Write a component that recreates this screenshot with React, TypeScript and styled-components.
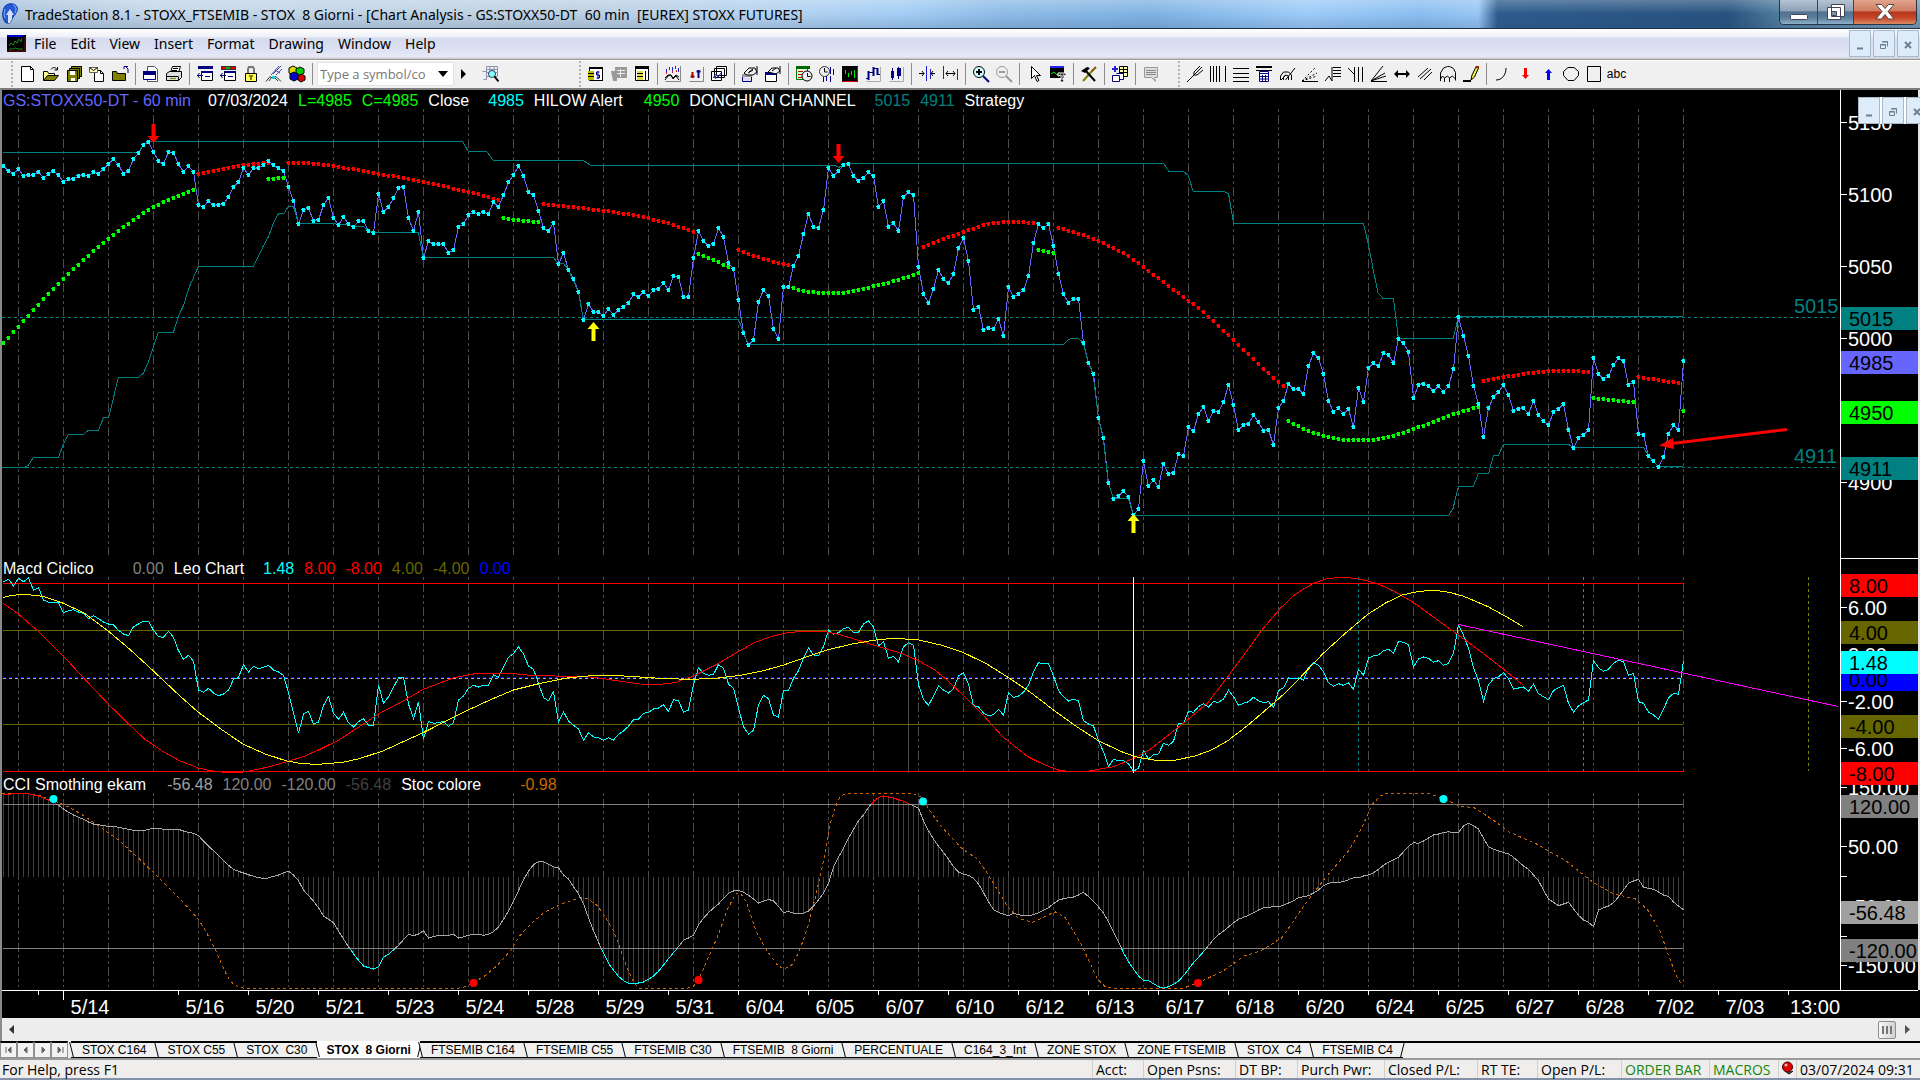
import React from "react";
import styled, { createGlobalStyle } from "styled-components";

const UI = `"Open Sans", "Noto Sans", sans-serif`;
const CAPTION = `"Noto Sans", "Open Sans", sans-serif`;
const ARIAL = `"Liberation Sans", Arial, sans-serif`;

const Global = createGlobalStyle`
  * { box-sizing: border-box; }
  body { margin: 0; background: #f0f0f0; font-family: ${UI}; color: #000; overflow: hidden; }
  button, input { font: inherit; color: inherit; }
`;

const Page = styled.div`display: flex; flex-direction: column; min-height: 100vh;`;

/* ---------- title bar ---------- */
const TitleBar = styled.header`
  display: flex; align-items: flex-start; height: 29px; padding-left: 1px;
  border-bottom: 1px solid #1d3247;
  background:
    linear-gradient(180deg, rgba(255,255,255,.25), rgba(255,255,255,0) 50%, rgba(40,70,110,.18)),
    linear-gradient(90deg, #a9c3dc 0, #c3d6e8 8%, #bdd0e2 30%, #b4d2ef 40%, #a3cdf4 47%, #8dbbe6 52%, #7fb2e2 60%, #9ccbf8 68%, #8abdf0 74%, #96c5f3 77%, #2c5b8c 78%, #27527f 90%, #54809f 93%, #7d9ab0 100%);
`;
const TitleText = styled.h1`
  flex: 1; margin: 0 0 0 6px; font-family: ${CAPTION}; font-size: 14px; font-weight: 400; line-height: 29px; white-space: pre;
`;
const WinButtons = styled.div`
  display: flex; height: 25px; margin-right: 3px; border: 1px solid #22354a; border-top: 0;
  border-radius: 0 0 5px 5px; overflow: hidden;
`;
const WinButton = styled.button<{ $w: number; $close?: boolean }>`
  width: ${p => p.$w}px; padding: 0; border: 0; border-right: 1px solid #33475c; display: grid; place-items: center;
  background: ${p => p.$close
    ? "linear-gradient(180deg,#e0a58c 0,#cf7c62 45%,#b5361b 50%,#c8472a 75%,#d98a62 100%)"
    : "linear-gradient(180deg,#b4c4d3 0,#8fa3b8 45%,#50708f 50%,#5c7f9d 75%,#8fb0c8 100%)"};
  &:last-child { border-right: 0; }
`;

/* ---------- menu bar ---------- */
const MenuBar = styled.nav`
  display: flex; align-items: center; height: 31px; padding: 0 0 2px 7px;
  background: linear-gradient(180deg, #fff 0, #eef0f8 8px, #d5dcee 9px, #dbe0f2 20px, #e6e9f7 28px, #b4b9cc 28px, #fff 29px, #9a9a9a 30px);
`;
const MenuItems = styled.div`display: flex; flex: 1; gap: 14px; margin-left: 8px;`;
const MenuItem = styled.button`
  padding: 0; border: 0; background: none; font-family: ${CAPTION}; font-size: 14px; line-height: 20px;
`;
const MdiButtons = styled.div`display: flex; gap: 2px; align-self: flex-start; padding: 1px 1px 0 0;`;
const MdiButton = styled.button`
  width: 22px; height: 27px; padding: 3px 0 0; border: 1px solid #a5b8cc; background: #deebf8;
  display: grid; place-items: center;
`;

/* ---------- tool bar ---------- */
const ToolBar = styled.div`
  display: flex; align-items: center; height: 30px; padding: 0 0 2px 11px; background: #f0f0f0;
  border-top: 1px solid #fff; border-bottom: 2px solid #7c7c7c;
`;
const Grip = styled.span`width: 5px; height: 26px; flex: none; border-left: 2px dotted #b4b4b4;`;
const Divider = styled.span`
  width: 8px; height: 22px; flex: none; display: flex; justify-content: center;
  &::before { content: ""; width: 1px; background: #8c8c8c; }
`;
const Gap = styled.span<{ $w: number }>`width: ${p => p.$w}px; flex: none;`;
const ToolButton = styled.button<{ $w?: number }>`
  width: ${p => p.$w || 23}px; height: 23px; flex: none; padding: 0; border: 0; background: none; display: grid; place-items: center;
`;
const SymbolBox = styled.label`
  display: flex; align-items: center; width: 137px; height: 24px; padding: 0 4px 0 2px; background: #fff; border: 1px solid #e2e3ea;
`;
const SymbolInput = styled.input`
  flex: 1; min-width: 0; padding: 0; border: 0; outline: 0; background: none; font-size: 13px;
  &::placeholder { color: #777; opacity: 1; }
`;
const DropArrow = styled.button`
  width: 12px; height: 12px; padding: 0; border: 0; background: none; display: grid; place-items: center;
`;

/* ---------- chart ---------- */
const Chart = styled.main`
  display: grid; grid-template-columns: 1fr 80px; background: #000; font-family: ${ARIAL};
  border-left: 2px solid #8a8a8a; position: relative;
`;
const Panes = styled.div`display: flex; flex-direction: column; min-width: 0;`;
const Legend = styled.div<{ $h: number; $line: number }>`
  display: flex; gap: 10px; height: ${p => p.$h}px; padding-left: 1px; font-size: 16px; line-height: ${p => p.$line}px;
  white-space: pre;
`;
const Entry = styled.span<{ $c?: string; $lead?: number }>`
  color: ${p => p.$c || "#fff"}; margin-left: ${p => p.$lead || 0}px;
`;
const Plot = styled.svg<{ $h: number }>`display: block; width: 100%; height: ${p => p.$h}px;`;
const Scale = styled.svg`display: block; width: 80px; height: 900px; background: #000;`;
const TimeAxis = styled.div`
  grid-column: 1 / -1; display: flex; height: 28px; padding-right: 2px; border-top: 1px solid #fff; font-size: 20px;
  margin-right: 2px; color: #fff;
`;
const TimeCell = styled.span<{ $grow: number; $tick: number }>`
  flex: ${p => p.$grow} 1 0; min-width: 0; display: flex;
  &::before { content: ""; width: 1px; height: ${p => p.$tick}px; background: #fff; }
`;
const TimeLabel = styled.span`width: 52px; flex: none; text-align: center; line-height: 32px;`;
const FloatingButtons = styled.div`
  position: absolute; top: 7px; right: 0; width: 62px; height: 27px; overflow: hidden; display: flex; gap: 2px; background: #fff;
`;
const FloatingButton = styled(MdiButton)`flex: none;`;

/* ---------- bottom bars ---------- */
const ScrollBar = styled.div`
  display: flex; align-items: center; height: 23px; padding: 0 9px 0 5px; background: #ededed; border-left: 2px solid #8a8a8a;
`;
const ScrollArrow = styled.button`width: 8px; height: 14px; padding: 0; border: 0; background: none; display: grid; place-items: center;`;
const ScrollTrack = styled.div`flex: 1; display: flex; justify-content: flex-end; padding-right: 7px;`;
const Thumb = styled.span`
  width: 18px; height: 18px; border: 1px solid #8e8e8e; border-radius: 2px; background: linear-gradient(90deg,#f7f7f7,#d2d2d2);
  display: flex; justify-content: center; gap: 2px; padding: 4px 0;
  i { width: 2px; background: #777; }
`;
const TabBar = styled.div`
  display: flex; height: 19px; background: #f0f0f0; border-bottom: 2px solid #9a9a9a; font-family: ${ARIAL};
`;
const NavButton = styled.button`
  width: 17px; height: 17px; padding: 0; border: 1px solid #909090; border-top: 2px solid #000; background: #f2f2f2;
  display: grid; place-items: center; flex: none;
`;
const Tab = styled.button<{ $active?: boolean; $last?: boolean }>`
  position: relative; height: 17px; padding: ${p => (p.$active ? "0 9px" : "0 10px 0 11px")}; border: 0; flex: none; white-space: pre;
  font-size: 12px; line-height: 15px; font-weight: ${p => (p.$active ? 700 : 400)};
  background: ${p => (p.$active ? "#fff" : "#f0f0f0")};
  border-top: 2px solid ${p => (p.$active ? "#fff" : "#000")};
  border-bottom: 1px solid ${p => (p.$active ? "#fff" : "#000")};
  &::before, &::after { content: ""; position: absolute; top: -1px; bottom: 0; width: 1px; background: #000; }
  &::before { left: 0; transform: skewX(14deg); }
  &::after { right: 0; transform: skewX(-14deg); display: ${p => (p.$active || p.$last ? "block" : "none")}; }
`;
const TabRest = styled.span`flex: 1; border-top: 2px solid #000;`;
const StatusBar = styled.footer`
  display: flex; height: 20px; padding: 0 3px 0 2px; background: #f0eeec; border-bottom: 2px solid #8290a8;
  font-size: 14px; line-height: 20px;
`;
const Help = styled.span`flex: 1;`;
const Cell = styled.span<{ $w: number; $green?: boolean }>`
  width: ${p => p.$w}px; flex: none; padding-left: 3px; border-left: 1px solid #d2d0ce; white-space: nowrap;
  color: ${p => (p.$green ? "#118511" : "#000")};
`;

/* ---------- icons ---------- */
const K = "#000", NV = "#000080", OL = "#808000", G = "#9a9a9a";
const S = ({ d, c = K, w = 1, f = "none" }: { d: string; c?: string; w?: number; f?: string }) => (
  <path d={d} stroke={c} strokeWidth={w} fill={f} />
);
const F = ({ d, c = K }: { d: string; c?: string }) => <path d={d} fill={c} />;
const page = "M2.5 1.5h9l3 3v12h-12z";

const ICONS: Record<string, React.ReactNode> = {
  "New": <><S d={page} f="#fff" /><S d="M11.5 1.5v3h3" /></>,
  "Open": <><S d="M1.5 15.5v-9h4l1 2h6v3" f="#ff9" /><S d="M1.5 15.5l4-5h11l-4 5z" f={OL} /><S d="M9 4.5c2-3 5-2 6 0M15.5 2v3h-3" /></>,
  "Save all": <><S d="M6.5 1.5h10v10h-10z" f={OL} /><S d="M4.5 3.5h10v10h-10z" f={OL} /><S d="M2.5 5.5h10v11h-10z" f={OL} /><F d="M5 6h5v4h-5zM6 13h4v3h-4z" c="#fff" /></>,
  "Mail": <><S d="M6.5 5.5h6l3 3v8h-9z" f="#fff" /><S d="M12.5 5.5v3h3" /><S d="M1.5 2.5h8v5h-8z" f="#ffc" c="#665" /><S d="M1.5 2.5l4 3 4-3" /></>,
  "Close folder": <><S d="M1.500 15.500v-9h4l1 2h8v7z" f={OL} /><S d="M17 8v-4l-2-2M13 4v-2.500h4" c={NV} /></>,
  "Window page": <><S d="M5.500 1.500h7l3 3v12h-10z" c="#556" f="#fff" /><S d="M1.500 6.500h12v8h-12z" c={NV} f="#fff" /><F d="M1 6h13v4h-13z" c={NV} /></>,
  "Print": <><S d="M5.500 7.500l2-6h8l-2 6" f="#fff" /><S d="M1.500 8.500l3-2h12v6l-3 3h-12z" f="#ddd" /><S d="M2 11.500h11M8 3.500h5M7 5.500h5M13.500 11.500v4" /><F d="M5 13h6v1h-6z" c={OL} /></>,
  "Style sheet": <><F d="M2 1h15v3h-15z" c={NV} /><S d="M5.500 6.500h11v9h-11z" f="#fff" /><F d="M5 6h12v2h-12z" c={NV} /><S d="M1 10.500h6M3.500 8l-2 2.500 2 2.500M9 11.500h5" c={NV} /></>,
  "Colour sheet": <><F d="M2 1h15v4h-15z" c="#333" /><F d="M3 2h4v2h-4zM12 2h4v2h-4z" c="#e00" /><F d="M7 2h4v2h-4z" c="#0b0" /><S d="M5.500 6.500h11v9h-11z" f="#fff" /><F d="M5 6h12v2h-12z" c={NV} /><S d="M1 10.500h6M3.500 8l-2 2.500 2 2.500M9 11.500h5" c={NV} /></>,
  "Lock": <><S d="M6 9v-5l1-2h4l1 2v5" w={2} c="#777" /><S d="M3.500 8.500h11v8h-11z" f="#ffff55" /><F d="M7 10h4v2h-1v3h-2v-3h-1z" c={OL} /></>,
  "Satellite": <><S d="M1 16.500l4-5 3 2 3-2 5 5M4 16l2-3M13 16l-3-3" c="#333" /><S d="M8 9l8-8M6 10l8-9M11 10l6-6M10 5l5 3" c="#4a4ab0" /><F d="M7 11h3v3h-3z" c="#2cc" /></>,
  "Balls": <><path d="M1 3l4-2 4 2v5l-4 2-4-2z" fill="#dd0" stroke={K} /><path d="M8 4l4-2 4 2v4l-4 3-4-3z" fill="#0c0" stroke={K} /><path d="M2 9l4-2 4 2v5l-4 2-4-2z" fill="#00c" stroke={K} /><path d="M10 11l3-2 4 2v4l-4 2-3-2z" fill="#d00" stroke={K} /></>,
  "Play": <F d="M7 4l5 5-5 5z" />,
  "Find symbol": <><S d="M1.500 6.500h4v8h-3M5.500 1.500h11v10h-11zM5.500 4.500h11M5.500 7.500h11M9 2v9M13 2v9" c="#8a93a8" f="#eef" /><circle cx="11" cy="9" r="3.500" fill="#8ff" stroke="#345" /><S d="M13.500 11.500l4 5" w={2} c={K} /></>,
  "Quotes": <><S d="M2.500 3.500h13v12h-13z" f="#fff" /><F d="M2 2h14v2h-14zM15 2h1v14h-1z" /><F d="M1 6h6v9h-6z" c="#bb0" /><S d="M1 8.500h6M1 11.500h6" /><S d="M12.500 7h-3v3h3v3h-3M11 6v8" c={NV} /></>,
  "Grid off": <><F d="M5 2h12v11h-12zM1 6h6v10h-4z" c={G} /><S d="M7 5.500h8M7 8.500h8M10.500 4v8" c="#eee" /></>,
  "Table": <><S d="M2.500 1.500h13v14h-13z" f="#fff" /><F d="M2 1h14v3h-14z" /><F d="M4 6h6v9h-6z" c="#dd4" /><S d="M4 8.500h6M4 11.500h6M12.500 6v9" /></>,
  "Indicator": <><S d="M2.500 7v-3M5.500 5v-3M8.500 6v-4M11.500 4v-3M14.500 7v-4" c="#22c" /><S d="M2.500 9v-2M8.500 8v-2M12.500 7v-2" c="#c22" /><S d="M1 15l3-4 3-1 2 4 3-3 3 4" /><S d="M1 13l3-3h3l2 3 3-3 3 2" /><S d="M16.500 1v15.500h-15" c="#888" /></>,
  "Show me": <><S d="M16.500 2v14.500h-14" c="#888" /><S d="M5.500 7v6M3.500 11.500h4" c="#900" w={2} /><S d="M11.500 13v-8M9.500 6.500h4" c={NV} w={2} /></>,
  "Strategy stack": <><S d="M6.500 1.500h10v9h-10zM4.500 3.500h10v9h-10zM1.500 6.500h10v9h-10z" f="#fff" /><S d="M3 13l3-4 2 3 3-4" c="#22c" /><S d="M5.500 14v-3" c="#c00" /></>,
  "Format window": <><S d="M1.500 9.500h9v7h-9z" c={NV} f="#dde" /><F d="M1 9h10v3h-10z" c="#999" /><S d="M3 8l5-5h6l2 4-4 3h-6z" f="#eee" /><S d="M8 7l4-3M7 8l5-3M16 1v9" /></>,
  "Format symbol": <><S d="M1.500 8.500h11v8h-11z" f="#fff" /><F d="M1 7h12v3h-12z" c={NV} /><S d="M4 7l4-4h6l2 3-4 3z" f="#eee" /><S d="M8 6l4-3M16 1v8" /></>,
  "Session time": <><S d="M1.500 2.500h11v12h-11z" f="#dfd" c="#070" /><F d="M1 1h14v3h-14z" c="#060" /><S d="M3 6.500h5M3 9.500h4M3 12.500h4" c="#c00" /><circle cx="12" cy="11" r="5" fill="#eee" stroke={K} /><S d="M12.500 8v3.500h3" /></>,
  "Clock bars": <><circle cx="6.500" cy="6.500" r="5" fill="#eee" stroke="#333" /><S d="M6.500 3v4h3" /><S d="M12.500 2v7M15.500 4v6M5.500 12v5M8.500 11v5M12.500 11v6" c={NV} /></>,
  "Black chart": <><F d="M1 1h16v16h-16z" /><S d="M4.500 5v4M7.500 8v4M10.500 6v4M13.500 5v8" c="#0e0" /><S d="M16.500 2v14.500h-15" c="#d00" /></>,
  "OHLC bars": <><S d="M4.500 6v9M9.500 2v9M13.500 3v7" c={NV} w={2} /><S d="M2 13.500h2M5 7.500h4M10 3.500h3M14 9.500h2" c={NV} /><S d="M16.500 2v14.500h-14" c="#aaa" /></>,
  "Candles": <><S d="M5.500 3v12M11.500 2v12" c={NV} /><F d="M4 6h3v7h-3zM10 3h4v8h-4z" c={NV} /><S d="M16.500 2v14.500h-14" c="#aaa" /></>,
  "Compress": <><S d="M8.500 1v15M12.500 4v10" c="#22c" /><S d="M1 8.500h5M4 6l2 2.500-2 2.500M17 8.500h-4M15 6l-2 2.500 2 2.500" /></>,
  "Expand": <><S d="M2.500 1v13M16.500 4v11" c="#22c" /><S d="M5 8.500h9M7 6l-2 2.500 2 2.500M12 6l2 2.500-2 2.500" /></>,
  "Zoom in": <><circle cx="7" cy="7" r="5.500" fill="#cff" stroke={K} /><S d="M4 7h6M7 4v6" w={2} /><S d="M11 11l6 6" w={2} c={NV} /></>,
  "Zoom out": <><circle cx="7" cy="7" r="5.500" fill="none" stroke={G} /><S d="M4 7h6" c={G} w={2} /><S d="M11 11l6 6" w={2} c={G} /></>,
  "Pointer": <S d="M5.500 1.500v12l3-3 2.500 6 2-1-2.500-5h4z" f="#fff" />,
  "Text chart": <><F d="M1 1h14v12h-14z" /><F d="M1 1h14v2h-14z" c="#22f" /><S d="M2 9l3-2 3 3 3-2" c="#0e0" /><path d="M9 8h8v3h-1l-1-1h-1v5h1v2h-4v-2h1v-5h-1l-1 1h-1z" fill="#222" stroke="#fff" strokeWidth="1" /></>,
  "Tools": <><S d="M3 16L13 5" c={OL} w={2} /><S d="M5 5l10 11" w={2} /><F d="M1 6l6-4 3 1-5 5-2-1z" /><S d="M12 6l4-4" w={2} c="#850" /></>,
  "Add grid": <><S d="M8.500 1.500h8v10h-8z" f="#ffa" /><S d="M9 4.500h7M9 7.500h7M12.500 2v9" /><S d="M1 4h6M4 1v6" c="#22c" w={2} /><S d="M1.500 10.500h7v6h-7zM5.500 8.500h7v6h-4" f="#fff" c={NV} /></>,
  "Note off": <><path d="M2.500 2.500h13v10h-3l1 4-4-4h-7z" fill="#ddd" stroke={G} /><S d="M4 5.500h10M4 7.500h10M4 9.500h10" c="#888" /></>,
  "Pitchfork": <S d="M1 17l7-7M8 10v-3l6-6M8 10h3l6-5M8 10l8-8" />,
  "Vertical lines": <S d="M1.500 1v16M4.500 1v16M7.500 1v16M10.500 1v16M16.500 1v16" />,
  "Horizontal lines": <S d="M1 3.500h16M1 8.500h16M1 12.500h16M1 16.500h16" />,
  "Calculator": <><F d="M1 1h16v2h-16zM1 5h16v1h-16z" /><S d="M4.500 6.500h9v10h-9z" c={NV} f="#fff" /><S d="M5 8.500h8M7.500 10v6M10.500 10v6M5 11.500h8M5 14h8" c={NV} /></>,
  "Speed arcs": <S d="M2.500 15v-4l3-4h5l3 3v5M5.500 15v-3l2-2 3 1v4M7.500 15L17 3M3 15l5-5" />,
  "Fan dotted": <><path d="M1 16L15 2M1 16L16 8M1 16l15-5" stroke={K} strokeDasharray="2 2" /><S d="M1 16.500h16" /></>,
  "Retracement": <><S d="M1 16l4-5 3 5V2" /><S d="M9 2.500h8M9 5.500h8M9 8.500h8M9 11.500h8" /></>,
  "Time zones": <S d="M1 3l6 6M7.500 2v15M11.500 2v15M15.500 2v15" />,
  "Speed fan": <><S d="M1 16L13 1M1 16L15 8M1 16l15-5" /><S d="M1 16.500h16" /></>,
  "Arrow line": <><S d="M3 9h12" w={2} /><F d="M1 9l4-4v8zM17 9l-4-4v8z" /></>,
  "Parallel lines": <S d="M2 12L12 3M4 14L15 4M8 15l8-8" />,
  "Cycles": <S d="M1.500 16v-8l3-5 4-1.500h2l4 2 2 4v8M1.500 14l2-3 2 2v4M5.500 13l3-2 2 2v4M10.500 13l3-2 3 3" />,
  "Pencil": <><S d="M1 16h8" w={2} /><S d="M9 15l1-5 4-8 2.500 1-4 9z" f="#ee4" /><F d="M13 1h4v3z" c="#a20" /></>,
  "Arc": <S d="M3 15c6 0 10-5 10-12" w={1} />,
  "Down arrow": <F d="M8 3h3v7h2l-3.500 4-3.500-4h2z" c="#f00" />,
  "Up arrow": <F d="M8 15h3v-7h2l-3.500-4-3.500 4h2z" c="#00f" />,
  "Ellipse": <path d="M6 2.500h6l4.500 4v4l-4.500 5h-6l-4.500-5v-4z" fill="none" stroke={K} />,
  "Rectangle": <S d="M2.500 1.500h13v15h-13z" />,
};
const Tool = ({ n, w }: { n: string; w?: number }) => (
  <ToolButton type="button" aria-label={n} title={n} $w={w}>
    <svg width="18" height="18" viewBox="0 0 18 18">{ICONS[n]}</svg>
  </ToolButton>
);
const Tools = ({ list }: { list: string[] }) => (
  <>{list.map((n, i) => (n === "|" ? <Divider key={i} /> : <Tool key={i} n={n} />))}</>
);
const AbcButton = styled(ToolButton)`font-family: ${ARIAL}; font-size: 12px;`;

const glyphs: Record<string, string> = {
  Minimize: "M2 8.500h6",
  Restore: "M3.500 1.500h5v5M1.500 4.500h5v4h-5zM3 2h6M1 5h6",
  Close: "M2 2l6 6M8 2l-6 6",
};
const Mini = ({ n }: { n: string }) => (
  <svg width="10" height="10" viewBox="0 0 10 10"><S d={glyphs[n]} c="#6d7f92" w={n === "Restore" ? 1 : 2} /></svg>
);

/* ---------- series ----------
   Samples are kept in plotter units, 2.45 to a pixel across and 3 down.
   The history is split in three sheets of 640 pixels; every bar is 5 pixels wide. */
type Pt = [number, number];
const SHEETS = [0, 640, 1280];
const bars = (top: number, ys: number[]): Pt[] => ys.map((y, i) => [3.5 + 5 * i, top + y / 3]);
const trace = (top: number, sheets: number[][]): Pt[] =>
  sheets.flatMap((s, k) => {
    const out: Pt[] = [];
    for (let i = 0; i < s.length; i += 2) out.push([SHEETS[k] + s[i] / 2.45, top + s[i + 1] / 3]);
    return out;
  });
const line = (p: Pt[]) => p.map(([x, y], i) => `${i ? "L" : "M"}${x.toFixed(1)} ${y.toFixed(1)}`).join("");

const CLOSE = bars(110, [
  168,182,191,177,198,195,195,185,204,191,183,195,216,207,207,198,195,198,185,191,177,162,147,165,191,183,147,129,105,96,126,153,
  162,126,129,162,186,168,186,285,291,272,285,285,282,261,231,216,174,195,174,174,165,153,165,174,183,231,272,342,300,294,333,330,
  285,264,324,345,321,342,351,333,333,363,369,252,306,291,264,234,231,324,363,306,444,393,402,402,402,429,420,351,342,315,306,312,
  306,312,276,291,255,216,195,168,198,246,255,303,354,363,339,462,429,480,507,546,630,582,606,606,618,597,615,600,591,579,552,561,
  546,558,540,537,519,540,498,501,561,561,444,363,393,408,402,354,381,459,477,570,669,705,690,576,540,558,657,687,531,531,468,438,
  372,312,351,354,300,174,198,183,165,162,198,213,204,186,198,291,273,351,339,363,261,246,255,471,552,579,537,480,507,519,492,414,
  384,453,600,591,660,654,657,627,678,531,561,552,540,498,399,342,354,342,408,492,552,579,567,567,699,759,792,924,984,1119,1167,1158,
  1143,1161,1216,1197,1053,1128,1110,1131,1062,1092,1089,1032,1038,951,963,912,891,933,903,906,876,825,885,960,945,942,915,936,963,960,1005,894,
  873,822,837,837,852,768,729,744,792,873,906,894,912,897,951,834,876,774,759,768,729,735,759,687,699,726,864,825,822,828,843,828,
  846,828,777,621,678,738,828,882,981,894,861,846,825,855,903,897,894,912,873,915,933,945,906,897,882,960,1014,984,975,960,744,792,
  807,798,765,744,753,825,816,972,975,1038,1053,1071,1041,972,945,960,753,
]);
const LEO = bars(550, [
  95,88,108,85,95,84,120,113,150,157,157,158,188,182,179,186,190,206,197,206,216,222,225,241,252,257,230,222,214,214,241,260,
  262,244,262,302,328,316,334,420,427,415,429,437,432,420,388,382,344,366,349,356,352,346,360,366,376,428,490,550,492,484,523,516,
  466,440,490,508,487,518,531,515,506,526,526,405,460,440,412,384,382,462,506,455,568,514,520,518,514,529,518,450,438,415,406,411,
  406,406,374,382,352,322,311,290,312,348,358,400,443,452,425,517,485,513,526,537,571,548,561,563,571,563,570,553,543,529,509,508,
  490,487,477,474,464,484,449,452,487,480,405,353,370,376,373,344,355,402,415,475,530,552,541,465,436,446,495,501,422,421,385,362,
  324,293,315,317,290,240,253,248,236,232,247,247,222,212,232,288,275,325,319,336,290,278,286,405,448,466,438,408,420,429,416,378,
  368,402,467,470,490,497,494,478,496,428,442,438,427,405,366,338,342,340,378,422,440,453,448,452,512,522,528,572,605,650,628,632,
  632,641,664,655,602,627,614,612,580,586,574,521,520,484,487,470,461,471,455,457,448,420,440,466,460,455,442,452,458,455,472,422,
  413,384,386,384,391,352,338,346,365,398,409,401,406,399,418,358,376,324,317,315,302,298,309,274,277,285,350,327,321,325,337,332,
  346,340,310,224,256,295,354,392,454,404,386,380,368,386,417,414,411,424,402,431,440,449,422,413,406,460,486,468,458,450,332,353,
  364,358,340,330,336,376,370,455,460,486,495,508,477,444,430,433,334,
]);
const CCI = bars(550, [
  733,733,731,730,730,731,735,738,744,750,757,766,777,787,795,802,808,816,822,824,827,829,829,832,835,838,841,842,842,838,835,835,
  838,838,838,838,843,847,850,857,873,888,902,917,932,946,958,964,969,974,979,983,985,984,979,975,968,964,975,992,1020,1037,1053,1073,
  1098,1108,1118,1143,1167,1190,1211,1231,1248,1253,1257,1250,1222,1213,1200,1186,1169,1153,1157,1152,1142,1164,1160,1156,1156,1156,1153,1164,1161,1156,1153,1153,
  1156,1153,1145,1131,1108,1083,1054,1022,989,964,944,935,935,943,951,953,975,987,1010,1031,1062,1103,1142,1177,1210,1240,1261,1279,1292,1300,1302,1299,
  1296,1288,1278,1264,1245,1226,1208,1190,1171,1164,1155,1125,1105,1088,1074,1062,1045,1030,1023,1021,1027,1036,1047,1059,1054,1048,1053,1069,1088,1084,1090,1090,
  1090,1083,1068,1050,1030,1000,952,922,895,865,838,812,795,772,756,742,738,741,744,749,754,761,767,775,812,842,867,889,907,928,950,966,
  973,976,985,1002,1028,1055,1079,1087,1093,1097,1090,1094,1097,1097,1094,1088,1081,1073,1061,1051,1046,1043,1041,1035,1027,1040,1054,1070,1090,1115,1145,1175,
  1208,1235,1257,1278,1291,1292,1301,1310,1315,1310,1303,1293,1277,1258,1238,1222,1205,1187,1168,1154,1143,1131,1118,1108,1102,1096,1088,1080,1073,1072,1070,1070,
  1066,1059,1052,1043,1040,1037,1029,1020,1007,1000,997,997,995,989,983,984,978,975,968,958,946,937,929,922,905,889,878,880,873,864,855,852,
  848,845,848,848,828,820,827,837,865,890,898,902,908,911,922,935,948,958,975,992,1020,1047,1057,1067,1062,1057,1076,1096,1110,1117,1130,1080,
  1073,1068,1058,1041,1020,1000,993,988,1012,1015,1018,1026,1035,1039,1056,1068,1079,
]);

/* Each run is a list of [bar, value] knots, joined linearly with one dot on every bar. */
const dotRun = (knots: Pt[]): Pt[] => {
  const out: Pt[] = [];
  for (let k = 0; k < knots.length; k++) {
    const [a, ya] = knots[k];
    const [b, yb] = knots[k + 1] || [a + 1, ya];
    for (let i = a; i < b; i++) out.push([3.5 + 5 * i, 110 + (ya + ((yb - ya) * (i - a)) / (b - a)) / 3]);
  }
  return out;
};
const RED_RUNS: Pt[][] = [
  [[39,192],[42,183],[46,171],[49,164],[53,158]],
  [[57,158],[60,159],[63,163],[66,168],[70,178],[75,192],[80,204],[85,218],[90,236],[95,252],[99,270]],
  [[108,282],[112,288],[117,297],[122,306],[127,318],[133,339],[138,366]],
  [[147,420],[149,432],[151,441],[153,450],[155,459],[157,465]],
  [[184,411],[188,387],[192,366],[196,345],[198,339],[201,336],[204,336],[206,339]],
  [[211,354],[214,366],[216,375],[219,393],[222,414],[225,438],[228,471],[232,516],[236,561],[239,594],[242,633],[246,690],[250,747],[254,804],[256,828]],
  [[296,813],[300,801],[304,792],[309,783],[314,783],[317,786]],
  [[327,801],[331,810],[335,819]],
];
const GREEN_RUNS: Pt[][] = [
  [[0,699],[2,666],[4,633],[6,600],[8,567],[10,537],[12,507],[14,477],[16,450],[18,423],[20,399],[22,375],[24,351],[26,330],[28,309],[30,291],[32,276],[34,264],[36,252],[38,240]],
  [[53,207],[56,203]],
  [[100,324],[102,330],[107,336]],
  [[139,432],[142,450],[145,471]],
  [[158,534],[160,543],[163,549],[168,549],[171,540],[175,525],[179,510],[183,489]],
  [[207,420],[210,429]],
  [[257,933],[259,948],[261,963],[264,978],[268,990],[274,990],[278,978],[282,957],[286,936],[290,912],[295,891]],
  [[318,864],[322,870],[326,876]],
  [[336,903]],
];
const dots = (p: Pt[]) =>
  p.map(([x, y]) => {
    const cx = Math.floor(x), cy = Math.round(y);
    return `M${cx - 2} ${cy - 1}h1v-1h3v4h-3v-2h-1z`;
  }).join("");

const UPPER = trace(110, [
  [8,128,338,128,351,105,363,95,1134,95,1147,125,1193,125,1209,152,1430,152,1447,166],
  [0,166,475,166,487,172,499,166,510,160,1283,160,1295,184,1331,184,1343,196,1355,244,1430,244,1442,252,1454,340],
  [0,340,204,340,216,400,230,490,240,548,253,566,278,566,290,686,424,686,437,620,988,620],
]);
const LOWER = trace(110, [
  [5,1073,60,1073,70,1065,81,1043,143,1043,155,1003,167,973,205,973,216,961,241,961,254,922,266,922,278,863,290,802,339,802,351,790,363,757,388,667,425,667,437,618,450,585,462,536,486,469,621,469,645,408,658,379,670,339,682,311,695,311,706,290,719,290,731,341,817,341,829,343,853,343,866,349,890,349,902,362,915,368,1025,368,1037,443,1356,443,1368,461,1381,461,1393,480,1417,546,1429,628],
  [0,628,241,628,265,703,1038,703,1050,688,1060,685,1074,685,1086,698,1098,759,1110,792,1123,924,1135,984,1147,1119,1160,1166,1196,1166,1209,1216],
  [0,1216,413,1216,424,1195,437,1129,474,1129,486,1090,511,1090,523,1036,535,1036,547,1003,707,1003,719,1013,891,1013,903,1038,915,1053,927,1070,988,1070],
]);
const FAST = trace(550, [
  [8,160,45,192,90,240,155,318,205,384,265,462,315,522,355,568,400,605,440,632,486,654,515,662,545,666,595,666,620,661,660,650,706,634,745,619,780,600,830,570,880,530,927,492,980,458,1037,418,1080,398,1110,384,1160,372,1210,370,1258,371,1300,376,1360,378,1440,380,1480,386,1520,394],
  [0,402,50,403,85,398,131,378,190,342,240,305,280,278,320,260,360,248,400,244,455,245,490,254,530,269,580,288,640,310,682,332,720,358,750,388,793,437,840,495,890,562,950,620,990,644,1030,662,1050,664,1100,663,1160,650,1210,625,1250,598,1300,550,1343,508,1390,460,1440,380,1490,297,1525,238],
  [0,176,30,140,60,115,85,98,115,86,150,82,185,85,215,93,240,102,280,124,330,160,380,205,440,258,500,312,550,360,596,406],
]);
const SLOW = trace(550, [
  [8,142,30,136,60,133,105,139,155,160,205,188,265,243,320,300,375,362,440,437,486,487,540,536,596,583,650,612,700,632,740,641,780,643,840,637,880,626,940,602,990,574,1040,546,1090,515,1147,480,1200,450,1258,420,1320,401,1390,384,1440,378,1500,376],
  [0,381,60,386,131,388,190,384,240,377,300,363,352,345,410,320,461,299,520,282,572,271,620,265,680,269,740,286,793,308,850,342,903,383,960,430,1013,480,1070,530,1123,572,1180,605,1220,622,1270,632,1310,631,1360,618,1400,600,1440,572,1490,525],
  [0,443,40,395,106,310,160,250,216,192,260,158,300,135,340,124,380,121,415,127,450,139,510,170,560,204,596,231],
]);
const STOC = trace(550, [
  [5,731,70,731,100,738,131,752,170,772,205,797,245,830,290,870,340,925,390,985,440,1045,486,1108,505,1145,530,1205,550,1262,565,1295,585,1312,600,1315,1120,1315,1140,1310,1160,1298,1190,1276,1220,1244,1250,1203,1275,1155,1300,1122,1335,1086,1380,1060,1420,1043,1440,1047,1462,1065,1480,1096,1500,1135,1515,1180,1535,1250,1553,1298,1566,1314],
  [0,1315,115,1315,131,1308,143,1290,165,1230,190,1160,215,1075,235,1032,245,1027,262,1060,285,1145,310,1200,335,1243,352,1258,372,1245,390,1205,410,1135,430,1040,450,930,465,825,482,760,490,742,502,731,670,731,690,742,710,782,740,832,790,897,825,925,850,968,900,1068,925,1104,962,1117,1000,1095,1018,1086,1040,1100,1080,1180,1120,1285,1140,1311,1160,1315,1330,1315,1367,1299,1430,1262,1480,1218,1520,1203],
  [5,1163,60,1065,110,985,170,900,200,835,225,765,245,738,260,731,365,731,400,745,440,768,475,773,520,808,560,845,630,883,700,932,768,998,820,1033,870,1046,900,1078,930,1140,950,1210,970,1275,985,1305],
]);

const GridLines = ({ y1, y2 }: { y1: number; y2: number }) => (
  <path
    d={Array.from({ length: 38 }, (_, k) => `M${18.5 + 45 * k} ${y1}V${y2}`).join("")}
    stroke="#4c4c4c" strokeDasharray="3 3 9 3 3 3"
  />
);
const DownMark = ({ x, y }: { x: number; y: number }) => (
  <path d={`M${x - 2} ${y}h4v12h4l-6 7-6-7h4z`} fill="#f00" shapeRendering="auto" />
);
const UpMark = ({ x, y }: { x: number; y: number }) => (
  <path d={`M${x - 2} ${y + 19}h4v-12h4l-6-7-6 7h4z`} fill="#ff0" shapeRendering="auto" />
);

const TAGS: [number, string, string][] = [
  [307, "#008080", "5015"], [351, "#6666ff", "4985"], [401, "#00ff00", "4950"], [457, "#008080", "4911"],
  [574, "#ff0000", "8.00"], [621, "#666600", "4.00"], [668, "#0000ff", "0.00"], [651, "#00ffff", "1.48"],
  [715, "#666600", "-4.00"], [762, "#ff0000", "-8.00"], [795, "#808080", "120.00"], [901, "#a0a0a0", "-56.48"],
  [939, "#808080", "-120.00"],
];
const MARKS: [number, string][] = [
  [122, "5150"], [194, "5100"], [266, "5050"], [338, "5000"], [482, "4900"],
  [607, "6.00"], [654, "2.00"], [701, "-2.00"], [748, "-6.00"],
  [787, "150.00"], [846, "50.00"], [876, ""], [906, "-50.00"], [936, ""], [965, "-150.00"],
];
const DATES = "5/16 5/20 5/21 5/23 5/24 5/28 5/29 5/31 6/04 6/05 6/07 6/10 6/12 6/13 6/17 6/18 6/20 6/24 6/25 6/27 6/28 7/02 7/03".split(" ");
const TABS = ["STOX C164", "STOX C55", "STOX  C30", "STOX  8 Giorni", "FTSEMIB C164", "FTSEMIB C55", "FTSEMIB C30", "FTSEMIB  8 Giorni", "PERCENTUALE", "C164_3_Int", "ZONE STOX", "ZONE FTSEMIB", "STOX  C4", "FTSEMIB C4"];
const NAV: [string, string][] = [
  ["First", "M3 3v6M8 3l-3 3 3 3z"], ["Previous", "M7 3l-3 3 3 3z"], ["Next", "M5 3l3 3-3 3z"], ["Last", "M9 3v6M4 3l3 3-3 3z"],
];

export default function App() {
  return (
    <Page>
      <Global />
      <TitleBar>
        <svg width="18" height="28" viewBox="0 0 18 28">
          <path d="M3 8c1-3 5-5 9-4 4 1 5 4 4 7-1 2-2 4-4 6l-3 6H5c-3-3-4-8-3-12z" fill="#2458d6" stroke="#1038a0" />
          <path d="M7 23v-8H5l4-6 4 6h-2v4l-2 4z" fill="#d5def4" /><path d="M12 5c3 1 4 4 2 8M4 9c-1 3-1 6 0 9" stroke="#86b4ff" fill="none" strokeWidth="1" />
        </svg>
        <TitleText>{"TradeStation 8.1 - STOXX_FTSEMIB - STOX  8 Giorni - [Chart Analysis - GS:STOXX50-DT  60 min  [EUREX] STOXX FUTURES]"}</TitleText>
        <WinButtons>
          <WinButton type="button" aria-label="Minimize" $w={38}>
            <svg width="20" height="20"><rect x="1.5" y="12.500" width="17" height="5" rx="1" fill="#fff" stroke="#445" /></svg>
          </WinButton>
          <WinButton type="button" aria-label="Restore" $w={36}>
            <svg width="22" height="20"><path d="M6.500 2.500h13v12h-13zM2.500 5.500h13v12h-13z" fill="#fff" stroke="#445" /><path d="M6.500 9.500h5v4h-5z" fill="#7c95ad" stroke="#445" /></svg>
          </WinButton>
          <WinButton type="button" aria-label="Close" $w={62} $close>
            <svg width="22" height="20"><path d="M2 2.500h5.500l3.500 4 3.500-4h5.500l-6 7 6 7.500h-5.500l-3.500-4.500-3.500 4.500h-5.500l6-7.500z" fill="#fff" stroke="#544" /></svg>
          </WinButton>
        </WinButtons>
      </TitleBar>

      <MenuBar>
        <svg width="19" height="17" viewBox="0 0 19 17">
          <path d="M0 0h19v17h-19z" /><path d="M0 0h17v2h-17z" fill="#00c" /><path d="M18 2v14h-18" stroke="#711" fill="none" />
          <path d="M2 11l2-3 2 2 2-4 2 2 2-4 2 3 1-4M2 14h4l2-1 3 1h5" stroke="#1c8a1c" fill="none" />
        </svg>
        <MenuItems>
          {["File", "Edit", "View", "Insert", "Format", "Drawing", "Window", "Help"].map(m => <MenuItem key={m} type="button">{m}</MenuItem>)}
        </MenuItems>
        <MdiButtons>
          {Object.keys(glyphs).map(n => <MdiButton key={n} type="button" aria-label={`${n} chart`}><Mini n={n} /></MdiButton>)}
        </MdiButtons>
      </MenuBar>

      <ToolBar>
        <Grip />
        <Tools list={["New", "Open", "Save all", "Mail", "Close folder", "|", "Window page", "Print", "|", "Style sheet", "Colour sheet", "Lock", "Satellite", "Balls", "|"]} />
        <Gap $w={1} />
        <SymbolBox>
          <SymbolInput aria-label="Symbol" placeholder="Type a symbol/co" />
          <DropArrow type="button" aria-label="Symbol list"><svg width="10" height="6"><path d="M0 0h10l-5 6z" /></svg></DropArrow>
        </SymbolBox>
        <Tool n="Play" w={18} />
        <Gap $w={6} />
        <Tool n="Find symbol" />
        <Gap $w={78} />
        <Grip />
        <Tools list={["Quotes", "Grid off", "Table", "|", "Indicator", "Show me", "Strategy stack", "|", "Format window", "Format symbol", "|", "Session time", "Clock bars", "Black chart", "OHLC bars", "Candles", "|", "Compress", "Expand", "|", "Zoom in", "Zoom out", "|", "Pointer", "Text chart", "|", "Tools", "|", "Add grid", "|", "Note off"]} />
        <Gap $w={16} />
        <Grip />
        <Tools list={["Pitchfork", "Vertical lines", "Horizontal lines", "Calculator", "Speed arcs", "Fan dotted", "Retracement", "Time zones", "Speed fan", "Arrow line", "Parallel lines", "Cycles", "Pencil", "|", "Arc", "Down arrow", "Up arrow", "Ellipse", "Rectangle"]} />
        <AbcButton type="button">abc</AbcButton>
      </ToolBar>

      <Chart>
        <Panes>
          <Legend $h={19} $line={21}>
            <Entry $c="#6666ff">GS:STOXX50-DT - 60 min</Entry>
            <Entry $lead={7}>07/03/2024</Entry>
            <Entry $c="#00ff00">L=4985</Entry>
            <Entry $c="#00ff00">C=4985</Entry>
            <Entry>Close</Entry>
            <Entry $c="#00ffff" $lead={9}>4985</Entry>
            <Entry>HILOW Alert</Entry>
            <Entry $c="#00ff00" $lead={11}>4950</Entry>
            <Entry>DONCHIAN CHANNEL</Entry>
            <Entry $c="#008080" $lead={9}>5015</Entry>
            <Entry $c="#008080">4911</Entry>
            <Entry>Strategy</Entry>
          </Legend>
          <Plot $h={446} viewBox="2 109 1838 446" preserveAspectRatio="none" fill="none" shapeRendering="crispEdges">
            <GridLines y1={109} y2={555} />
            <path d="M2 317.500H1837M2 467.500H1837" stroke="#008080" strokeDasharray="3 3" />
            <path d={line(CLOSE)} stroke="#6666ff" />
            <path d={line(UPPER)} stroke="#008080" />
            <path d={line(LOWER)} stroke="#008080" />
            <path d={RED_RUNS.map(r => dots(dotRun(r))).join("")} fill="#f00" />
            <path d={GREEN_RUNS.map(r => dots(dotRun(r))).join("")} fill="#0f0" />
            <path d={dots(CLOSE)} fill="#0ff" />
            <DownMark x={153.5} y={124} /><DownMark x={838.5} y={144} />
            <UpMark x={593.5} y={322} /><UpMark x={1133.5} y={514} />
            <g shapeRendering="auto">
              <path d="M1787 429.500L1668 444" stroke="#f00" strokeWidth="3" />
              <path d="M1659 445.500l14-7.500 1 11z" fill="#f00" />
            </g>
            <g fill="#008080" fontFamily="Liberation Sans, Arial, sans-serif" fontSize="20">
              <text x="1794" y="313">5015</text><text x="1794" y="463">4911</text>
            </g>
          </Plot>
          <Legend $h={22} $line={27}>
            <Entry>Macd Ciclico</Entry>
            <Entry $c="#808080" $lead={29}>0.00</Entry>
            <Entry>Leo Chart</Entry>
            <Entry $c="#00ffff" $lead={9}>1.48</Entry>
            <Entry $c="#ff0000">8.00</Entry>
            <Entry $c="#ff0000">-8.00</Entry>
            <Entry $c="#666600">4.00</Entry>
            <Entry $c="#666600">-4.00</Entry>
            <Entry $c="#0000ff">0.00</Entry>
          </Legend>
          <Plot $h={196} viewBox="2 577 1838 196" preserveAspectRatio="none" fill="none" shapeRendering="crispEdges">
            <GridLines y1={577} y2={773} />
            <path d="M908.500 577V773" stroke="#4c4c4c" />
            <path d="M1358.500 577V771" stroke="#008080" strokeDasharray="3 3" />
            <path d="M1583.500 577V771M1808.500 577V771" stroke="#808000" strokeDasharray="3 3" />
            <path d="M3 677.500H1683" stroke="#0000ff" strokeDasharray="3 3" />
            <path d="M3 678.500H1683" stroke="#b0b0b0" strokeDasharray="3 3" />
            <path d="M3 583.500H1683M3 771.500H1683" stroke="#ff0000" />
            <path d="M3 630.500H1683M3 724.500H1683" stroke="#666600" />
            <path d={line(LEO)} stroke="#00ffff" />
            <path d={line(FAST)} stroke="#ff0000" />
            <path d={line(SLOW)} stroke="#ffff00" />
            <path d="M1458.500 624.500L1838 706.500" stroke="#ff00ff" />
            <path d="M1133.500 577V773" stroke="#fff" />
          </Plot>
          <Legend $h={20} $line={24}>
            <Entry>CCI Smothing ekam</Entry>
            <Entry $c="#a0a0a0" $lead={11}>-56.48</Entry>
            <Entry $c="#808080">120.00</Entry>
            <Entry $c="#808080">-120.00</Entry>
            <Entry $c="#404040">-56.48</Entry>
            <Entry>Stoc colore</Entry>
            <Entry $c="#cc6600" $lead={29}>-0.98</Entry>
          </Legend>
          <Plot $h={197} viewBox="2 793 1838 197" preserveAspectRatio="none" fill="none" shapeRendering="crispEdges">
            <defs>
              <clipPath id="over"><rect x="0" y="780" width="1700" height="24" /></clipPath>
              <clipPath id="inside"><rect x="0" y="804" width="1700" height="145" /></clipPath>
              <clipPath id="under"><rect x="0" y="949" width="1700" height="45" /></clipPath>
            </defs>
            <GridLines y1={793} y2={987} />
            <path d={CCI.map(([x, y]) => `M${x} 876.500V${y.toFixed(1)}`).join("")} stroke="#404040" />
            <path d="M3 804.500H1683M3 948.500H1683" stroke="#808080" />
            <path d={line(STOC)} stroke="#cc6600" strokeDasharray="3 3" />
            <path d={line(CCI)} stroke="#a8a8a8" clipPath="url(#inside)" />
            <path d={line(CCI)} stroke="#ff0000" clipPath="url(#over)" />
            <path d={line(CCI)} stroke="#00ffff" clipPath="url(#under)" />
            <g shapeRendering="auto">
              {[[53.5, 799], [923, 801.5], [1443.5, 799]].map(([x, y]) => <circle key={x} cx={x} cy={y} r="4" fill="#0ff" />)}
              {[[473.5, 983], [698.500, 980], [1198, 983]].map(([x, y]) => <circle key={x} cx={x} cy={y} r="4" fill="#f00" />)}
            </g>
          </Plot>
        </Panes>

        <Scale viewBox="1840 90 80 900" fontFamily="Liberation Sans, Arial, sans-serif" fontSize="20">
          <path d="M1840.500 90V990" stroke="#fff" />
          {MARKS.map(([y, t]) => (
            <g key={y}>
              <path d={`M1841 ${y + 0.5}h6`} stroke="#fff" />
              <text x="1848" y={y + 8} fill="#fff">{t}</text>
            </g>
          ))}
          <path d="M1840 558.500H1918" stroke="#fff" />
          {TAGS.map(([y, c, t]) => (
            <g key={y}>
              <rect x="1841" y={y} width="77" height="23" fill={c} />
              <text x="1849" y={y + 19} fill="#000">{t}</text>
            </g>
          ))}
          <path d="M1918 90h2v900h-2z" fill="#e4e4e4" />
        </Scale>

        <TimeAxis>
          <TimeCell $grow={36} $tick={0} />
          <TimeCell $grow={25} $tick={4} />
          <TimeCell $grow={115} $tick={9}><TimeLabel>5/14</TimeLabel></TimeCell>
          {DATES.map(d => <TimeCell key={d} $grow={70} $tick={4}><TimeLabel>{d}</TimeLabel></TimeCell>)}
          <TimeCell $grow={128} $tick={4}><TimeLabel>13:00</TimeLabel></TimeCell>
        </TimeAxis>

        <FloatingButtons>
          {Object.keys(glyphs).map(n => <FloatingButton key={n} type="button" aria-label={`${n} window`}><Mini n={n} /></FloatingButton>)}
        </FloatingButtons>
      </Chart>

      <ScrollBar>
        <ScrollArrow type="button" aria-label="Scroll left"><svg width="5" height="9"><path d="M5 0v9l-5-4.500z" fill="#333" /></svg></ScrollArrow>
        <ScrollTrack><Thumb><i /><i /><i /></Thumb></ScrollTrack>
        <ScrollArrow type="button" aria-label="Scroll right"><svg width="5" height="9"><path d="M0 0v9l5-4.500z" fill="#555" /></svg></ScrollArrow>
      </ScrollBar>

      <TabBar>
        {NAV.map(([n, d]) => (
          <NavButton key={n} type="button" aria-label={n}><svg width="12" height="12"><path d={d} fill="#666" stroke="#666" /></svg></NavButton>
        ))}
        <Gap $w={3} />
        {TABS.map((t, i) => <Tab key={t} type="button" $active={i === 3} $last={i === TABS.length - 1}>{t}</Tab>)}
        <TabRest />
      </TabBar>

      <StatusBar>
        <Help>For Help, press F1</Help>
        <Cell $w={51}>Acct:</Cell>
        <Cell $w={92}>Open Psns:</Cell>
        <Cell $w={62}>DT BP:</Cell>
        <Cell $w={87}>Purch Pwr:</Cell>
        <Cell $w={93}>Closed P/L:</Cell>
        <Cell $w={60}>RT TE:</Cell>
        <Cell $w={84}>Open P/L:</Cell>
        <Cell $w={88} $green>ORDER BAR</Cell>
        <Cell $w={69} $green>MACROS</Cell>
        <Cell $w={18}>
          <svg width="12" height="14" viewBox="0 0 12 14"><path d="M3 10l4 3 4-3" fill="#555" stroke={K} /><circle cx="5.500" cy="6" r="5" fill="#d00" stroke="#400" /><circle cx="4" cy="4" r="1.500" fill="#fbb" /></svg>
        </Cell>
        <Cell $w={121}>03/07/2024 09:31</Cell>
      </StatusBar>
    </Page>
  );
}
